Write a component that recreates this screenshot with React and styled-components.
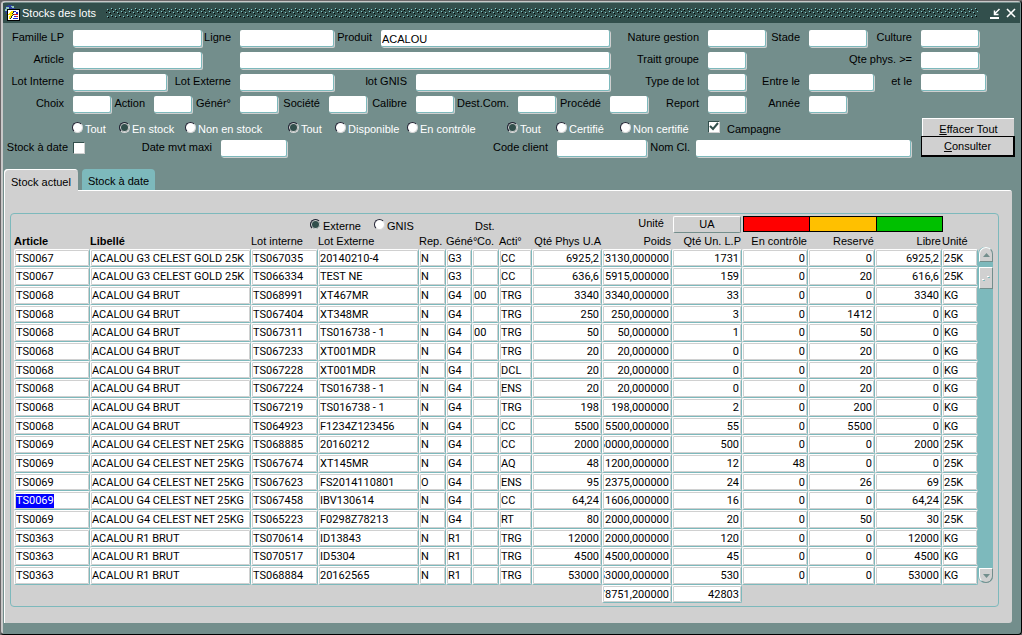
import React from "react";
import styled, { createGlobalStyle, css } from "styled-components";

const c = {
  body: "#738e8c",
  title: "#324f4c",
  teal: "#7db9bc",
  panel: "#d0d0d0",
};

const Global = createGlobalStyle`
  *, *::before, *::after { box-sizing: border-box; }
  html, body { margin: 0; }
  body { background: #666; }
  body, input, button, table {
    font: 11px/14px "Liberation Sans", Arial, sans-serif;
    color: #000;
  }
`;

const Window = styled.main`
  min-height: 100vh;
  display: flex;
  flex-direction: column;
  background: ${c.body};
  border: 1px solid #6b6668;
  border-right-color: #000;
  border-bottom-color: #000;
  border-radius: 4px;
  box-shadow: inset 2px 1px 0 #c8c8c8;
  padding: 2px 1px 11px 2px;
`;

const TitleBar = styled.header`
  height: 20px;
  display: flex;
  align-items: center;
  gap: 2px;
  padding: 0 2px 0 1px;
  background: ${c.title};
`;

const Title = styled.h1`
  margin: 0;
  font-size: 11px;
  font-weight: 400;
  color: #fff;
  white-space: nowrap;
`;

const Grip = styled.svg`
  flex: 1;
  min-width: 0;
  height: 12px;
  margin: 0 8px;
`;

const TitleButton = styled.button`
  width: 14px;
  height: 13px;
  padding: 0;
  border: 0;
  background: none;
  display: grid;
  place-items: center;
`;

const Form = styled.form`
  padding: 6px 5px 0;
  display: flex;
  flex-direction: column;
  gap: 4px;
`;

const Row = styled.div`
  display: grid;
  grid-template-columns: ${(p) => p.$cols.map((n) => `minmax(0, ${n}fr)`).join(" ")};
  align-items: center;
  height: 18px;
`;

const Label = styled.label`
  display: block;
  padding: 0 ${(p) => p.$gap || 9}px 3px 0;
  text-align: right;
  white-space: nowrap;
  justify-self: end;
`;

const Field = styled.input`
  width: calc(100% - 1px);
  height: 17px;
  padding: 2px 0 0 1px;
  border: 0 solid ${c.teal};
  border-width: 0 1px 1px 0;
  border-radius: 2px;
  box-shadow: 1px 1px 0 ${c.panel};
  background: #fff;
  outline: 0;
`;

const FormFoot = styled.div`
  display: grid;
  grid-template-columns: minmax(0, 913fr) minmax(0, 94fr);
  margin-top: 1px;
`;

const FootRows = styled.div`
  display: flex;
  flex-direction: column;
  gap: 3px;
`;

const Actions = styled.div`
  display: flex;
  flex-direction: column;
`;

const ActionButton = styled.button`
  height: 18px;
  margin: 0 1px;
  padding: 2px 0 0;
  border: 1px solid #fff;
  border-width: 1px 0 0 1px;
  background: ${c.panel};
  ${(p) =>
    p.$default &&
    css`
      height: 21px;
      margin: 0;
      padding: 0;
      border: 1px solid #000;
      border-width: 1px 2px 2px 1px;
    `}
`;

const Choice = styled.label`
  display: flex;
  align-items: center;
  gap: ${(p) => p.$gap || 2}px;
  padding-top: 3px;
  white-space: nowrap;
  color: ${(p) => (p.$light ? "#fff" : "#000")};
`;

const Radio = styled.input.attrs({ type: "radio" })`
  appearance: none;
  flex: none;
  width: 11px;
  height: 11px;
  margin: 0 0 3px;
  border: 1px solid;
  border-color: #223 #d8d8d8 #d8d8d8 #223;
  border-radius: 50%;
  background: #fff;
  &:checked {
    background: ${c.title};
    box-shadow: inset 0 0 0 1px ${c.panel};
  }
`;

const CheckBox = styled.input.attrs({ type: "checkbox" })`
  appearance: none;
  flex: none;
  width: 12px;
  height: 12px;
  margin: 0;
  border: 1px solid;
  border-color: ${c.title} ${c.panel} ${c.panel} ${c.title};
  background: #fff;
`;

const CheckWrap = styled.span`
  display: grid;
  margin-bottom: 3px;
  > * { grid-area: 1 / 1; }
  svg { pointer-events: none; z-index: 1; }
`;

const Tabs = styled.div`
  display: flex;
  align-items: flex-start;
  gap: 4px;
  margin-top: 12px;
  padding-left: 1px;
`;

const Tab = styled.button`
  height: 21px;
  padding: 3px 6px 0;
  border: 0;
  border-radius: 4px 4px 0 0;
  background: ${c.teal};
  ${(p) =>
    p.$active &&
    css`
      height: 22px;
      margin-bottom: -1px;
      padding: 3px 7px 0;
      background: ${c.panel};
      box-shadow: inset 1px 1px 0 #fff;
      z-index: 1;
    `}
`;

const Panel = styled.section`
  flex: 1;
  margin: 0 8px 0 1px;
  padding: 23px 13px 16px 6px;
  background: ${c.panel};
  border-radius: 0 3px 3px 0;
  box-shadow: inset 1px 1px 0 #fff;
`;

const Block = styled.div`
  height: 100%;
  border: 1px solid ${c.teal};
  border-radius: 4px;
  padding: 1px 5px 3px 3px;
`;

const TopLine = styled(Row)`
  height: 18px;
`;

const ColumnNote = styled.span`
  padding-top: 4px;
`;

const UnitButton = styled.button`
  height: 17px;
  margin-right: 2px;
  padding: 0;
  border: 1px solid;
  border-color: #fff ${c.body} ${c.body} #fff;
  border-radius: 2px;
  background: ${c.panel};
`;

const Legend = styled.div`
  display: flex;
  height: 16px;
  border: 1px solid #000;
`;

const Swatch = styled.span`
  flex: 1;
  background: ${(p) => p.$color};
  & + & { border-left: 1px solid #000; }
`;

const GridArea = styled.div`
  display: flex;
`;

const Table = styled.table`
  flex: 1;
  min-width: 0;
  width: 100%;
  table-layout: fixed;
  border-collapse: separate;
  border-spacing: 0;
`;

const Th = styled.th`
  height: 16px;
  padding: 0 ${(p) => (p.$end ? 1 : 0)}px 0 ${(p) => p.$indent || 0}px;
  font-weight: ${(p) => (p.$bold ? 700 : 400)};
  text-align: ${(p) => (p.$end ? "right" : "left")};
  white-space: nowrap;
`;

const Tr = styled.tr`
  height: 19px;
  &:nth-child(3n + 1) { height: 18px; }
`;

const Td = styled.td`
  padding: 0;
  height: inherit;
  font-family: Roboto, "Liberation Sans", sans-serif;
`;

const Cell = styled.div`
  height: 100%;
  min-height: 18px;
  padding: 2px 2px 0 1px;
  background: #fff;
  border: 1px solid;
  border-color: #fff ${c.teal} ${c.teal} #fff;
  border-radius: 2px;
  box-shadow: inset 0 0 0 1px ${c.panel};
`;

const CellText = styled.div`
  display: flex;
  justify-content: ${(p) => (p.$end ? "flex-end" : "flex-start")};
  overflow: hidden;
  white-space: nowrap;
`;

const Selected = styled.mark`
  background: #00f;
  color: #fff;
`;

const ScrollBar = styled.div`
  width: 15px;
  height: 336px;
  margin: 14px 0 0;
  display: flex;
  flex-direction: column;
  background: ${c.teal};
  border-radius: 7px;
`;

const ScrollButton = styled.button`
  height: 15px;
  margin: 0 0 0 1px;
  padding: 0;
  border: 1px solid;
  border-color: #fff ${c.body} ${c.body} #fff;
  border-radius: ${(p) => (p.$down ? "0 0 7px 7px" : "7px 7px 0 0")};
  background: ${c.panel};
  display: grid;
  place-items: center;
`;

const Thumb = styled.div`
  height: 22px;
  margin: 5px 0 auto 1px;
  border: 1px solid;
  border-color: #fff ${c.body} ${c.body} #fff;
  background: ${c.panel};
  display: grid;
  place-items: center;
`;

function TextField({ id, label, value, gap }) {
  return (
    <>
      <Label htmlFor={id} $gap={gap}>{label}</Label>
      <Field id={id} defaultValue={value} />
    </>
  );
}

function RadioChoice({ name, label, checked, light, gap }) {
  return (
    <Choice $light={light} $gap={gap}>
      <Radio name={name} defaultChecked={checked} />
      {label}
    </Choice>
  );
}

function DataCell({ end, selected, children }) {
  return (
    <Td>
      <Cell>
        <CellText $end={end}>{selected ? <Selected>{children}</Selected> : children}</CellText>
      </Cell>
    </Td>
  );
}

const columns = [
  { label: "Article", w: 76, bold: true },
  { label: "Libellé", w: 161, bold: true },
  { label: "Lot interne", w: 67 },
  { label: "Lot Externe", w: 101 },
  { label: "Rep.", w: 27 },
  { label: "Géné°", w: 26 },
  { label: "Co.", w: 27, indent: 5 },
  { label: "Acti°", w: 33 },
  { label: "Qté Phys U.A", w: 70, end: true },
  { label: "Poids", w: 70, end: true },
  { label: "Qté Un. L.P", w: 70, end: true },
  { label: "En contrôle", w: 66, end: true },
  { label: "Reservé", w: 67, end: true },
  { label: "Libre", w: 67, end: true },
  { label: "Unité", w: 36 },
];

const rows = `TS0067|ACALOU G3 CELEST GOLD 25K|TS067035|20140210-4|N|G3||CC|6925,2|173130,000000|1731|0|0|6925,2|25K
TS0067|ACALOU G3 CELEST GOLD 25K|TS066334|TEST NE|N|G3||CC|636,6|15915,000000|159|0|20|616,6|25K
TS0068|ACALOU G4 BRUT|TS068991|XT467MR|N|G4|00|TRG|3340|3340,000000|33|0|0|3340|KG
TS0068|ACALOU G4 BRUT|TS067404|XT348MR|N|G4||TRG|250|250,000000|3|0|1412|0|KG
TS0068|ACALOU G4 BRUT|TS067311|TS016738 - 1|N|G4|00|TRG|50|50,000000|1|0|50|0|KG
TS0068|ACALOU G4 BRUT|TS067233|XT001MDR|N|G4||TRG|20|20,000000|0|0|20|0|KG
TS0068|ACALOU G4 BRUT|TS067228|XT001MDR|N|G4||DCL|20|20,000000|0|0|20|0|KG
TS0068|ACALOU G4 BRUT|TS067224|TS016738 - 1|N|G4||ENS|20|20,000000|0|0|20|0|KG
TS0068|ACALOU G4 BRUT|TS067219|TS016738 - 1|N|G4||TRG|198|198,000000|2|0|200|0|KG
TS0068|ACALOU G4 BRUT|TS064923|F1234Z123456|N|G4||CC|5500|5500,000000|55|0|5500|0|KG
TS0069|ACALOU G4 CELEST NET 25KG|TS068885|20160212|N|G4||CC|2000|50000,000000|500|0|0|2000|25K
TS0069|ACALOU G4 CELEST NET 25KG|TS067674|XT145MR|N|G4||AQ|48|1200,000000|12|48|0|0|25K
TS0069|ACALOU G4 CELEST NET 25KG|TS067623|FS2014110801|O|G4||ENS|95|2375,000000|24|0|26|69|25K
TS0069|ACALOU G4 CELEST NET 25KG|TS067458|IBV130614|N|G4||CC|64,24|1606,000000|16|0|0|64,24|25K
TS0069|ACALOU G4 CELEST NET 25KG|TS065223|F0298Z78213|N|G4||RT|80|2000,000000|20|0|50|30|25K
TS0363|ACALOU R1 BRUT|TS070614|ID13843|N|R1||TRG|12000|12000,000000|120|0|0|12000|KG
TS0363|ACALOU R1 BRUT|TS070517|ID5304|N|R1||TRG|4500|4500,000000|45|0|0|4500|KG
TS0363|ACALOU R1 BRUT|TS068884|20162565|N|R1||TRG|53000|53000,000000|530|0|0|53000|KG`
  .split("\n")
  .map((line) => line.split("|"));

const SELECTED_ROW = 13;

function AppIcon() {
  return (
    <svg width="16" height="16" viewBox="0 0 16 16" shapeRendering="crispEdges" aria-hidden="true">
      <circle cx="6" cy="5" r="5" fill="#2b3f9c" />
      <path d="M2 2h3v2H3v2H1V4h1zM7 1h3v2H8z" fill="#8fc7b8" />
      <path d="M3.500 4.500h12v11h-12z" fill="#fff" stroke="#000" />
      <path d="M9 6h3v1H9zM12 7h2v2h-2zM10 11h2v1h-2zM9 13h5v1H9z" fill="#1a2ad0" />
      <path d="M10 9h4v1h-4zM12 11h2v1h-2z" fill="#e01818" />
      <path d="M7 6h2v2H8v1h1v1H8v2H7v1H6v1H5v-3h1v-1H4V9h1V8h1V7h1z" fill="#ffe800" />
      <path d="M9 6h1v2H9v1h1v1H9v1H8v2H7v1H6v-1h1v-2h1v-1h1V9H8V8h1z" fill="#223" />
    </svg>
  );
}

function TitleGrip() {
  return (
    <Grip aria-hidden="true" shapeRendering="crispEdges">
      <defs>
        <pattern id="grip" width="8" height="12" patternUnits="userSpaceOnUse">
          <path d="M5 1h1v1H5zM1 2h1v1H1zM3 5h1v1H3zM7 4h1v1H7zM1 9h1v1H1zM5 8h1v1H5z" fill="#86cdd0" />
          <path d="M6 2h1v1H6zM2 3h1v1H2zM4 6h1v1H4zM0 5h1v1H0zM2 10h1v1H2zM6 9h1v1H6z" fill="#000" />
        </pattern>
      </defs>
      <rect width="100%" height="12" fill="url(#grip)" />
    </Grip>
  );
}

export default function App() {
  return (
    <Window>
      <Global />
      <TitleBar>
        <AppIcon />
        <Title>Stocks des lots</Title>
        <TitleGrip />
        <TitleButton type="button" aria-label="Réduire">
          <svg width="11" height="11" viewBox="0 0 11 11" fill="none" stroke="#fff">
            <path d="M0 10h9" strokeWidth="2" />
            <path d="M9.500 1L4.500 6M4.500 2.500V6.500H8.500" strokeWidth="1.500" />
          </svg>
        </TitleButton>
        <TitleButton type="button" aria-label="Fermer">
          <svg width="10" height="10" viewBox="0 0 10 10" stroke="#fff" strokeWidth="1.600">
            <path d="M1 1l8 8M9 1L1 9" />
          </svg>
        </TitleButton>
      </TitleBar>

      <Form onSubmit={(e) => e.preventDefault()}>
        <Row $cols={[65, 130, 37, 95, 46, 230, 97, 59, 42, 59, 53, 59, 35]}>
          <TextField id="famille" label="Famille LP" />
          <TextField id="ligne" label="Ligne" />
          <TextField id="produit" label="Produit" value="ACALOU" />
          <TextField id="nature" label="Nature gestion" />
          <TextField id="stade" label="Stade" />
          <TextField id="culture" label="Culture" />
        </Row>
        <Row $cols={[65, 130, 37, 371, 97, 39, 174, 59, 35]}>
          <TextField id="article" label="Article" />
          <span />
          <Field aria-label="Libellé article" />
          <TextField id="traitt" label="Traitt groupe" />
          <TextField id="qte" label="Qte phys. >=" />
        </Row>
        <Row $cols={[65, 95, 72, 95, 81, 195, 97, 39, 62, 66, 46, 66, 28]}>
          <TextField id="lotint" label="Lot Interne" />
          <TextField id="lotext" label="Lot Externe" />
          <TextField id="gnis" label="lot GNIS" />
          <TextField id="type" label="Type de lot" />
          <TextField id="entre" label="Entre le" />
          <TextField id="etle" label="et le" />
        </Row>
        <Row $cols={[65, 39, 42, 39, 47, 39, 50, 39, 48, 39, 63, 39, 53, 39, 59, 39, 62, 39, 167]}>
          <TextField id="choix" label="Choix" />
          <TextField id="action" label="Action" />
          <TextField id="gener" label="Génér°" />
          <TextField id="societe" label="Société" />
          <TextField id="calibre" label="Calibre" />
          <TextField id="dest" label="Dest.Com." />
          <TextField id="procede" label="Procédé" />
          <TextField id="report" label="Report" />
          <TextField id="annee" label="Année" />
        </Row>
        <FormFoot>
          <FootRows>
            <Row $cols={[64, 47, 66, 103, 47, 72, 100, 49, 64, 88, 213]}>
              <span />
              <RadioChoice light name="stock" label="Tout" />
              <RadioChoice light name="stock" label="En stock" checked />
              <RadioChoice light name="stock" label="Non en stock" />
              <RadioChoice light name="dispo" label="Tout" checked />
              <RadioChoice light name="dispo" label="Disponible" />
              <RadioChoice light name="dispo" label="En contrôle" />
              <RadioChoice light name="certif" label="Tout" checked />
              <RadioChoice light name="certif" label="Certifié" />
              <RadioChoice light name="certif" label="Non certifié" />
              <Choice $gap={7}>
                <CheckWrap>
                  <CheckBox defaultChecked />
                  <svg width="12" height="12" viewBox="0 0 12 12" fill="none" stroke={c.title} strokeWidth="2">
                    <path d="M2 5l3 3L10 2" />
                  </svg>
                </CheckWrap>
                Campagne
              </Choice>
            </Row>
            <Row $cols={[65, 148, 67, 269, 91, 48, 216, 9]}>
              <Label htmlFor="stockdate" $gap={5}>Stock à date</Label>
              <Row $cols={[12, 136]}>
                <CheckBox id="stockdate" />
                <Label htmlFor="mvt">Date mvt maxi</Label>
              </Row>
              <Field id="mvt" />
              <TextField id="client" label="Code client" />
              <TextField id="nom" label="Nom Cl." gap={6} />
            </Row>
          </FootRows>
          <Actions>
            <ActionButton type="reset">
              <u>E</u>ffacer Tout
            </ActionButton>
            <ActionButton $default type="submit">
              <u>C</u>onsulter
            </ActionButton>
          </Actions>
        </FormFoot>
      </Form>

      <Tabs role="tablist">
        <Tab $active role="tab" aria-selected="true">Stock actuel</Tab>
        <Tab role="tab" aria-selected="false">Stock à date</Tab>
      </Tabs>

      <Panel>
        <Block>
          <TopLine $cols={[296, 64, 101, 116, 82, 70, 200, 50]}>
            <span />
            <RadioChoice name="lot" label="Externe" checked />
            <RadioChoice name="lot" label="GNIS" />
            <ColumnNote>Dst.</ColumnNote>
            <Label htmlFor="unite">Unité</Label>
            <UnitButton id="unite" type="button">UA</UnitButton>
            <Legend>
              <Swatch $color="#ff0000" />
              <Swatch $color="#ffc000" />
              <Swatch $color="#00c000" />
            </Legend>
          </TopLine>
          <GridArea>
            <Table>
              <colgroup>
                {columns.map((col, i) => (
                  <col key={i} width={col.w} />
                ))}
              </colgroup>
              <thead>
                <tr>
                  {columns.map((col, i) => (
                    <Th key={i} $bold={col.bold} $end={col.end} $indent={col.indent}>{col.label}</Th>
                  ))}
                </tr>
              </thead>
              <tbody>
                {rows.map((row, r) => (
                  <Tr key={r}>
                    {row.map((value, i) => (
                      <DataCell key={i} end={columns[i].end} selected={r === SELECTED_ROW && i === 0}>
                        {value}
                      </DataCell>
                    ))}
                  </Tr>
                ))}
              </tbody>
              <tfoot>
                <Tr>
                  <td colSpan={9} />
                  <DataCell end>78751,200000</DataCell>
                  <DataCell end>42803</DataCell>
                  <td colSpan={4} />
                </Tr>
              </tfoot>
            </Table>
            <ScrollBar>
              <ScrollButton type="button" aria-label="Défiler vers le haut">
                <svg width="7" height="4" viewBox="0 0 7 4"><path d="M0 4h7L3.500 0z" fill={c.body} /></svg>
              </ScrollButton>
              <Thumb>
                <svg width="8" height="6" viewBox="0 0 8 6" shapeRendering="crispEdges">
                  <path d="M0 4h2v1H0zM5 1h2v1H5z" fill="#fff" />
                  <path d="M1 5h2v1H1zM6 2h2v1H6z" fill={c.teal} />
                </svg>
              </Thumb>
              <ScrollButton $down type="button" aria-label="Défiler vers le bas">
                <svg width="7" height="4" viewBox="0 0 7 4"><path d="M0 0h7L3.500 4z" fill={c.body} /></svg>
              </ScrollButton>
            </ScrollBar>
          </GridArea>
        </Block>
      </Panel>
    </Window>
  );
}
